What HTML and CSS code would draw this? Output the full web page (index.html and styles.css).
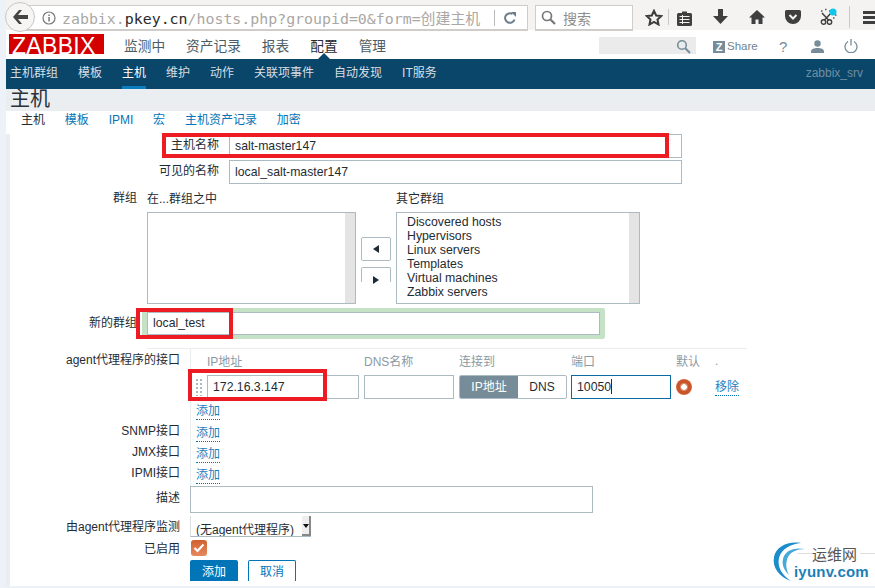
FILE: index.html
```html
<!DOCTYPE html>
<html lang="zh">
<head>
<meta charset="utf-8">
<title>主机</title>
<link rel="stylesheet" href="styles.css">
</head>
<body>
<div class="browser">
  <div class="back"><svg width="18" height="16" viewBox="0 0 18 16"><path d="M8 1 2 8l6 7h3L7 10h10V6H7l4-5z" fill="#444"/></svg></div>
  <div class="urlbar">
    <svg class="info" width="14" height="14" viewBox="0 0 14 14"><circle cx="7" cy="7" r="6" fill="none" stroke="#777" stroke-width="1.2"/><rect x="6.3" y="6" width="1.5" height="4.5" fill="#777"/><rect x="6.3" y="3.5" width="1.5" height="1.5" fill="#777"/></svg>
    <span class="url">zabbix.<b>pkey.cn</b>/hosts.php?groupid=0&amp;form=创建主机</span>
    <span class="reload"><svg width="14" height="14" viewBox="0 0 14 14"><path d="M11.5 8.5A4.8 4.8 0 1 1 9.5 3" fill="none" stroke="#6d7f8c" stroke-width="2"/><path d="M8 1h5v5z" fill="#6d7f8c"/></svg></span>
  </div>
  <div class="searchbar">
    <svg width="15" height="15" viewBox="0 0 15 15"><circle cx="6" cy="6" r="4.5" fill="none" stroke="#777" stroke-width="1.7"/><path d="m9.5 9.5 4.5 4.5" stroke="#777" stroke-width="2.2"/></svg>
    <span>搜索</span>
  </div>
  <div class="tools">
    <svg class="t-star" width="18" height="17" viewBox="0 0 18 17"><path d="m9 1.8 2.2 4.7 5 .6-3.7 3.4 1 5L9 13l-4.500 2.500 1-5L1.800 7.100l5-.6z" fill="none" stroke="#3c3c3c" stroke-width="2"/></svg>
    <i class="t-sep"></i>
    <svg class="t-clip" width="15" height="16" viewBox="0 0 15 16"><path d="M1.500 3H5V1.500h5V3h3.500A1.500 1.500 0 0 1 15 4.500v10a1.500 1.500 0 0 1-1.500 1.500h-12A1.500 1.500 0 0 1 0 14.500v-10A1.500 1.500 0 0 1 1.500 3z" fill="#3f3f3f"/><path d="M2.500 6.500h10M2.500 9.500h10M2.500 12.500h10M5.500 5v9" stroke="#f3f2f1" stroke-width="1"/></svg>
    <svg class="t-down" width="15" height="15" viewBox="0 0 15 15"><path d="M5 0h5v7h5l-7.500 8L0 7h5z" fill="#3f3f3f"/></svg>
    <svg class="t-home" width="16" height="14" viewBox="0 0 16 14"><path d="M8 0 0 7.500h2.500V14h4V9.500h3V14h4V7.500H16z" fill="#3f3f3f"/></svg>
    <svg class="t-pocket" width="16" height="14" viewBox="0 0 16 14"><path d="M1.500 0h13A1.500 1.500 0 0 1 16 1.500V6a8 8 0 0 1-16 0V1.500A1.500 1.500 0 0 1 1.500 0z" fill="#3f3f3f"/><path d="m4.500 5 3.500 3.500L11.500 5" fill="none" stroke="#f3f2f1" stroke-width="2"/></svg>
    <svg class="t-scissor" width="18" height="18" viewBox="0 0 18 18"><circle cx="3.500" cy="14" r="2.200" fill="none" stroke="#3f3f3f" stroke-width="1.400"/><circle cx="9.500" cy="14" r="2.200" fill="none" stroke="#3f3f3f" stroke-width="1.400"/><path d="M4.500 12 11 5M8.500 12 2 5" stroke="#3f3f3f" stroke-width="1.500"/><path d="M1 3h2M5 1.500h2M9 3h1M13 10h2M15 7h2" stroke="#555" stroke-width="1.400" stroke-dasharray="1.500 1"/><circle cx="13" cy="4" r="3.500" fill="#11c6e8"/></svg>
    <i class="t-sep t-sep2"></i>
    <span class="t-menu"><i></i><i></i><i></i></span>
  </div>
</div>

<div class="page">
  <header class="topnav">
    <div class="logo">ZABBIX</div>
    <nav class="mainmenu">
      <a>监测中</a><a>资产记录</a><a>报表</a><a class="current">配置</a><a>管理</a>
    </nav>
    <div class="toptools">
      <div class="topsearch"><svg width="15" height="15" viewBox="0 0 15 15"><circle cx="6" cy="6" r="4.300" fill="none" stroke="#768d99" stroke-width="1.600"/><path d="m9.300 9.300 4.700 4.700" stroke="#768d99" stroke-width="2"/></svg></div>
      <div class="share"><span class="zicon">Z</span>Share</div>
      <span class="help">?</span>
      <svg class="user" width="13" height="13" viewBox="0 0 13 13"><circle cx="6.500" cy="3.500" r="3.200" fill="#768d99"/><path d="M0 13v-1.500C0 9 3 8 6.500 8S13 9 13 11.500V13z" fill="#768d99"/></svg>
      <svg class="power" width="14" height="14" viewBox="0 0 14 14"><path d="M4 2.500a6 6 0 1 0 6 0" fill="none" stroke="#768d99" stroke-width="1.300"/><path d="M7 0v6.500" stroke="#768d99" stroke-width="1.300"/></svg>
    </div>
  </header>
  <nav class="subnav">
    <a>主机群组</a><a>模板</a><a class="active">主机</a><a>维护</a><a>动作</a><a>关联项事件</a><a>自动发现</a><a>IT服务</a>
    <span class="server">zabbix_srv</span>
  </nav>
  <div class="headband"><h1>主机</h1></div>
  <nav class="tabs">
    <a class="on">主机</a><a>模板</a><a>IPMI</a><a>宏</a><a>主机资产记录</a><a>加密</a>
  </nav>

  <form class="form">
    <div class="row row-wide r-name">
      <label>主机名称</label>
      <div class="input fullname">salt-master147</div>
    </div>
    <div class="row row-wide r-visible">
      <label>可见的名称</label>
      <div class="input fullname">local_salt-master147</div>
    </div>
    <div class="row row-mid r-groups">
      <label class="lift">群组</label>
      <div class="groups">
        <div class="gcol">
          <div class="ghead">在...群组之中</div>
          <div class="listbox lb-left"><i class="sb"></i></div>
        </div>
        <div class="arrows">
          <button type="button" class="arrow"><span class="tri-l"></span></button>
          <button type="button" class="arrow clip"><span class="tri-r"></span></button>
        </div>
        <div class="gcol">
          <div class="ghead">其它群组</div>
          <div class="listbox lb-right">
            <ul>
              <li>Discovered hosts</li><li>Hypervisors</li><li>Linux servers</li><li>Templates</li><li>Virtual machines</li><li>Zabbix servers</li>
            </ul>
            <i class="sb"></i>
          </div>
        </div>
      </div>
    </div>
    <div class="row row-mid r-new">
      <label>新的群组</label>
      <div class="glow"><div class="input newgroup">local_test</div></div>
    </div>

    <div class="divider"></div>

    <div class="row row-narrow r-agent">
      <label>agent代理程序的接口</label>
      <div class="ifcell">
        <div class="ifgrid ifhead">
          <span class="c-ip">IP地址</span><span>DNS名称</span><span>连接到</span><span>端口</span><span>默认</span><span class="dot">.</span>
        </div>
        <div class="ifgrid ifvals">
          <div class="c-ip ipwrap"><i class="handle"></i><div class="input ipinput">172.16.3.147</div></div>
          <div class="input"></div>
          <div class="seg"><span class="seg-on">IP地址</span><span>DNS</span></div>
          <div class="input port">10050<i class="caret"></i></div>
          <span class="radio"></span>
          <a class="link">移除</a>
        </div>
        <a class="link add">添加</a>
      </div>
    </div>
    <div class="row row-narrow r-if"><label>SNMP接口</label><div class="ifcell"><a class="link">添加</a></div></div>
    <div class="row row-narrow r-if"><label>JMX接口</label><div class="ifcell"><a class="link">添加</a></div></div>
    <div class="row row-narrow r-if"><label>IPMI接口</label><div class="ifcell"><a class="link">添加</a></div></div>
    <div class="row row-narrow r-desc"><label>描述</label><div class="input textarea"></div></div>
    <div class="row row-narrow r-proxy">
      <label>由agent代理程序监测</label>
      <div class="select"><span>(无agent代理程序)</span><i class="sel-btn"></i></div>
    </div>
    <div class="row row-narrow r-enabled">
      <label>已启用</label>
      <span class="check"><svg width="12" height="10" viewBox="0 0 12 10"><path d="m1.500 5 3 3 6-6.500" fill="none" stroke="#fff" stroke-width="2.200"/></svg></span>
    </div>
    <div class="row row-narrow r-buttons">
      <label></label>
      <div class="btns"><span class="btn primary">添加</span><span class="btn ghost">取消</span></div>
    </div>
  </form>
</div>

<div class="mark m1"></div>
<div class="mark m2"></div>
<div class="mark m3"></div>

<div class="watermark">
  <svg class="wm-arc" width="50" height="42" viewBox="0 0 50 42"><path d="M21 41C9 37 2 27 4 17 6 7 17 1 31 3 21 4 11 9 9 18 7 27 12 35 21 41z" fill="#1c8ccb"/><path d="M19 35C13 29 11 23 14 16 17 10 25 7 35 9 27 9 20 12 17.500 18 15.500 24 16 29 19 35z" fill="#45a9dc"/></svg>
  <i class="wm-line"></i>
  <span class="wm-cn">运维网</span>
  <span class="wm-en">iyunv.com</span>
</div>
```

FILE: styles.css
```css
* { box-sizing: border-box; }
html, body { margin: 0; padding: 0; }
body {
  position: relative;
  width: 875px;
  height: 588px;
  overflow: hidden;
  background: #edf1f8;
  font-family: "Liberation Sans", "Noto Sans CJK SC", sans-serif;
  font-size: 12px;
  color: #1f2c33;
}
a { color: #0275b8; text-decoration: none; }

/* browser chrome */
.browser {
  display: flex;
  align-items: flex-start;
  height: 30px;
  margin-left: 6px;
  background: #f4f3f2;
  position: relative;
}
.back {
  position: absolute;
  left: -1px;
  top: 2px;
  width: 30px;
  height: 30px;
  border: 1px solid #c9c7c5;
  border-radius: 50%;
  background: #f6f5f4;
  display: flex;
  align-items: center;
  justify-content: center;
  z-index: 2;
}
.urlbar {
  margin-left: 14px;
  width: 508px;
  height: 26px;
  margin-top: 5px;
  background: #fff;
  border: 1px solid #cfccc9;
  border-width: 1px 1px 2px 0;
  display: flex;
  align-items: center;
  padding-left: 22px;
}
.info { flex: none; }
.url {
  margin-left: 6px;
  font-family: "DejaVu Sans Mono", "Noto Sans CJK SC", monospace;
  font-size: 14.900px;
  color: #aaa7a5;
  white-space: nowrap;
  flex: 1;
  overflow: hidden;
}
.url b { font-weight: normal; color: #2a2a2a; }
.reload {
  flex: none;
  width: 33px;
  height: 16px;
  border-left: 1px solid #bdbbb9;
  display: flex;
  align-items: center;
  padding-left: 8px;
}
.searchbar {
  margin-left: 7px;
  width: 98px;
  height: 26px;
  margin-top: 5px;
  background: #fff;
  border: 1px solid #cfccc9;
  border-width: 1px 1px 2px 1px;
  display: flex;
  align-items: center;
  gap: 7px;
  padding-left: 5px;
  font-size: 14px;
  color: #8f8d8b;
}
.tools { flex: 1; height: 28px; position: relative; }
.tools > * { position: absolute; }
.t-star { left: 12px; top: 9px; }
.t-sep { left: 35px; top: 9px; width: 1px; height: 16px; background: #cbc9c7; }
.t-clip { left: 44px; top: 10px; }
.t-down { left: 80px; top: 9px; }
.t-home { left: 116px; top: 10px; }
.t-pocket { left: 152px; top: 10px; }
.t-scissor { left: 187px; top: 8px; }
.t-sep2 { left: 216px; top: 6px; height: 22px; }
.t-menu { left: 230px; top: 11px; width: 13px; display: flex; flex-direction: column; gap: 2px; }
.t-menu i { display: block; height: 3px; background: #3f3f3f; }

/* page */
.page { margin-left: 6px; height: 556px; background: #fff; }
.topnav { height: 29px; display: flex; align-items: flex-start; background: #fff; }
.logo {
  margin: 4px 0 0 3px;
  width: 95px;
  height: 20px;
  padding-left: 3px;
  background: #d40000;
  color: #fff;
  font-size: 23px;
  line-height: 25px;
  letter-spacing: 0.300px;
  overflow: hidden;
}
.mainmenu { margin-left: 20px; display: flex; gap: 21px; padding-top: 8px; font-size: 13.700px; line-height: 17px; }
.mainmenu a { color: #4b5c66; }
.mainmenu a.current { color: #1f2c33; position: relative; height: 21px; }
.mainmenu a.current::after {
  content: "";
  position: absolute;
  left: 8px;
  bottom: 0;
  border: 6px solid transparent;
  border-top: 0;
  border-bottom-color: #0a466a;
}
.toptools { position: relative; flex: 1; height: 29px; }
.toptools > * { position: absolute; }
.topsearch { left: 213px; top: 7px; width: 97px; height: 17px; background: #ebebeb; }
.topsearch svg { position: absolute; right: 5px; top: 2px; }
.share { left: 327px; top: 10px; display: flex; align-items: center; gap: 2px; color: #6f8693; font-size: 11.500px; line-height: 13px; }
.zicon { width: 12px; height: 12px; background: #768d99; color: #fff; font-weight: bold; font-size: 11px; line-height: 12px; text-align: center; }
.help { left: 393px; top: 8px; font-size: 15px; line-height: 17px; color: #768d99; }
.user { left: 425px; top: 10px; }
.power { left: 458px; top: 9px; }

.subnav {
  height: 30px;
  background: #0a466a;
  display: flex;
  gap: 20px;
  padding-left: 4px;
  position: relative;
  line-height: 29px;
}
.subnav a { color: #d6dfe5; height: 30px; }
.subnav a.active { color: #fff; border-bottom: 3px solid #0c7cc0; }
.server { position: absolute; right: 12px; top: 0; color: #6e8ea2; }

.headband { height: 22px; background: #ebeef0; padding-left: 4px; }
.headband h1 { margin: 0; font-weight: normal; font-size: 20px; line-height: 20px; color: #2a3237; }

.tabs { height: 23px; display: flex; gap: 19.800px; padding-left: 15px; line-height: 18px; }
.tabs a.on { color: #1f2c33; }

/* form */
.form { display: block; box-shadow: inset 4px 0 0 #ebeef0; height: 452px; }
.row { display: flex; align-items: flex-start; gap: 10px; }
.row > label { flex: none; text-align: right; color: #1f2c33; line-height: 20px; white-space: nowrap; }
.row-wide > label { width: 213px; line-height: 22px; }
.row-mid > label { width: 131px; }
.row-narrow > label { width: 174px; }
.input {
  height: 24px;
  border: 1px solid #acbbc3;
  background: #fff;
  padding: 0 5px;
  font-size: 12.250px;
  line-height: 22px;
  white-space: nowrap;
  overflow: hidden;
}
.fullname { width: 453px; }
.r-visible { margin-top: 2px; }
.r-groups { margin-top: 7px; }
.r-groups > label.lift { line-height: 14px; }
.groups { display: flex; }
.gcol { display: flex; flex-direction: column; }
.ghead { height: 21px; line-height: 16px; }
.listbox { height: 92px; border: 1px solid #acbbc3; position: relative; background: #fff; }
.lb-left { width: 209px; }
.lb-right { width: 244px; }
.sb { position: absolute; right: 0; top: 0; bottom: 0; width: 10px; background: #e4e4e4; }
.listbox ul { margin: 0; padding: 2px 0 0 10px; list-style: none; font-size: 12.300px; line-height: 14px; }
.arrows { width: 40px; padding: 46px 0 0 5px; display: flex; flex-direction: column; gap: 6px; }
.arrow {
  width: 30px;
  height: 24px;
  padding: 0;
  border: 1px solid #acbbc3;
  border-radius: 2px;
  background: #fff;
  display: flex;
  align-items: center;
  justify-content: center;
}
.arrow.clip { height: 15px; border-bottom: 0; border-radius: 2px 2px 0 0; padding-top: 9px; }
.tri-l { border: 4px solid transparent; border-left: 0; border-right: 6px solid #1f2c33; }
.tri-r { border: 4px solid transparent; border-right: 0; border-left: 6px solid #1f2c33; }
.r-new { margin-top: 4px; gap: 5px; }
.r-new > label { line-height: 31px; }
.glow { width: 463px; height: 31px; padding: 4px 5px 4px 5px; background: #c6e2c6; border-radius: 2px; }
.newgroup { height: 23px; width: 453px; line-height: 21px; }

.divider { margin: 9px 0 0 141px; width: 600px; height: 1px; background: #ebeef0; }

.ifcell { border-left: 1px solid #ebeef0; padding-left: 5px; }
.r-agent .ifcell { padding-left: 0; height: 77px; }
.r-agent > label { margin-top: 1px; }
.ifgrid {
  display: grid;
  grid-template-columns: 173px 95px 112px 105px 39px auto;
  align-items: center;
}
.ifhead { height: 26px; color: #8b9aa4; padding-bottom: 3px; }
.c-ip { padding-left: 16px; }
.dot { line-height: 12px; }
.ifvals { height: 24px; }
.ifvals > .input { width: 90px; }
.ipwrap { position: relative; padding-left: 16px; }
.ipinput { width: 152px; padding-left: 5px; }
.handle {
  position: absolute;
  left: 4px;
  top: 3px;
  width: 8px;
  height: 18px;
  background-image: radial-gradient(circle, #acb9c1 1.100px, transparent 1.200px);
  background-size: 4px 4px;
}
.seg { display: flex; width: 108px; height: 24px; border: 1px solid #acbbc3; border-radius: 2px; overflow: hidden; line-height: 22px; text-align: center; }
.seg span { flex: 1; }
.seg .seg-on { flex: none; width: 58px; background: #768d99; color: #fff; }
.ifvals > .port { width: 100px; border-color: #0a6aa1; position: relative; }
.caret { display: inline-block; width: 1px; height: 15px; background: #1f2c33; vertical-align: -3px; }
.radio {
  display: block;
  width: 16px;
  height: 16px;
  border-radius: 50%;
  background: radial-gradient(circle, #fff 0 2.500px, #e9a988 3px, #c9562a 4.500px, #c9562a 7px, #e0764a 8px);
}
.link { color: #1d7fc0; border-bottom: 1px dotted #0275b8; line-height: 15px; display: inline-block; }
.ifvals > .link { margin-top: 2px; justify-self: start; }
.ifcell > .link { display: block; width: 24px; }
.ifcell > .add { margin: 5px 0 0 5px; }
.r-if { height: 21px; }
.r-if > label { line-height: 15px; margin-top: -2px; }
.r-if .ifcell { height: 21px; }
.r-desc { margin-top: -3px; }
.textarea { width: 403px; height: 27px; }
.r-desc > label { line-height: 17px; margin-top: 4px; }
.r-proxy { margin-top: 3px; }
.r-proxy > label { line-height: 22px; }
.select {
  width: 121px;
  height: 21px;
  border-left: 1px solid #d8dde0;
  border-bottom: 1px solid #acbbc3;
  position: relative;
  overflow: hidden;
  line-height: 28px;
  padding-left: 5px;
  background: #fff;
}
.select span { white-space: nowrap; }
.sel-btn { position: absolute; right: 0; top: 0; bottom: 0; width: 9px; background: #eee; border-right: 2px solid #888; border-bottom: 2px solid #888; }
.sel-btn::after { content: ""; position: absolute; left: 1px; top: 8px; border: 3px solid transparent; border-bottom: 0; border-top: 4px solid #111; }
.r-enabled { margin-top: 2px; height: 20px; }
.r-enabled > label { line-height: 18px; }
.check {
  margin-left: 1px;
  width: 16px;
  height: 16px;
  border-radius: 3px;
  background: linear-gradient(#d0602e, #e58a5e);
  display: flex;
  align-items: center;
  justify-content: center;
}
.r-buttons { height: 21px; }
.btns { display: flex; gap: 10px; }
.btn { width: 48px; height: 21px; overflow: hidden; text-align: center; line-height: 25px; border-radius: 2px 2px 0 0; }
.primary { background: #0275b8; color: #fff; }
.ghost { border: 1px solid #0275b8; border-bottom: 0; color: #0275b8; line-height: 23px; }

/* annotation overlays */
.mark { position: absolute; border: 4px solid #ed1c24; pointer-events: none; }
.m1 { left: 162px; top: 133px; width: 507px; height: 25px; }
.m2 { left: 136px; top: 308px; width: 97px; height: 31px; }
.m3 { left: 188px; top: 369px; width: 139px; height: 32px; }

/* watermark */
.watermark { position: absolute; left: 770px; top: 540px; width: 105px; height: 44px; }
.watermark > * { position: absolute; }
.wm-arc { left: 0; top: 0; }
.wm-line { left: 28px; top: 13px; width: 77px; height: 1px; background: #ddd; }
.wm-cn { left: 42px; top: 6px; font-size: 15px; line-height: 18px; color: #555; background: #fff; padding: 0 3px 0 0; }
.wm-en { left: 24px; top: 23px; font-size: 15px; line-height: 18px; color: #1c7fb8; font-weight: bold; letter-spacing: 0.200px; }
```
